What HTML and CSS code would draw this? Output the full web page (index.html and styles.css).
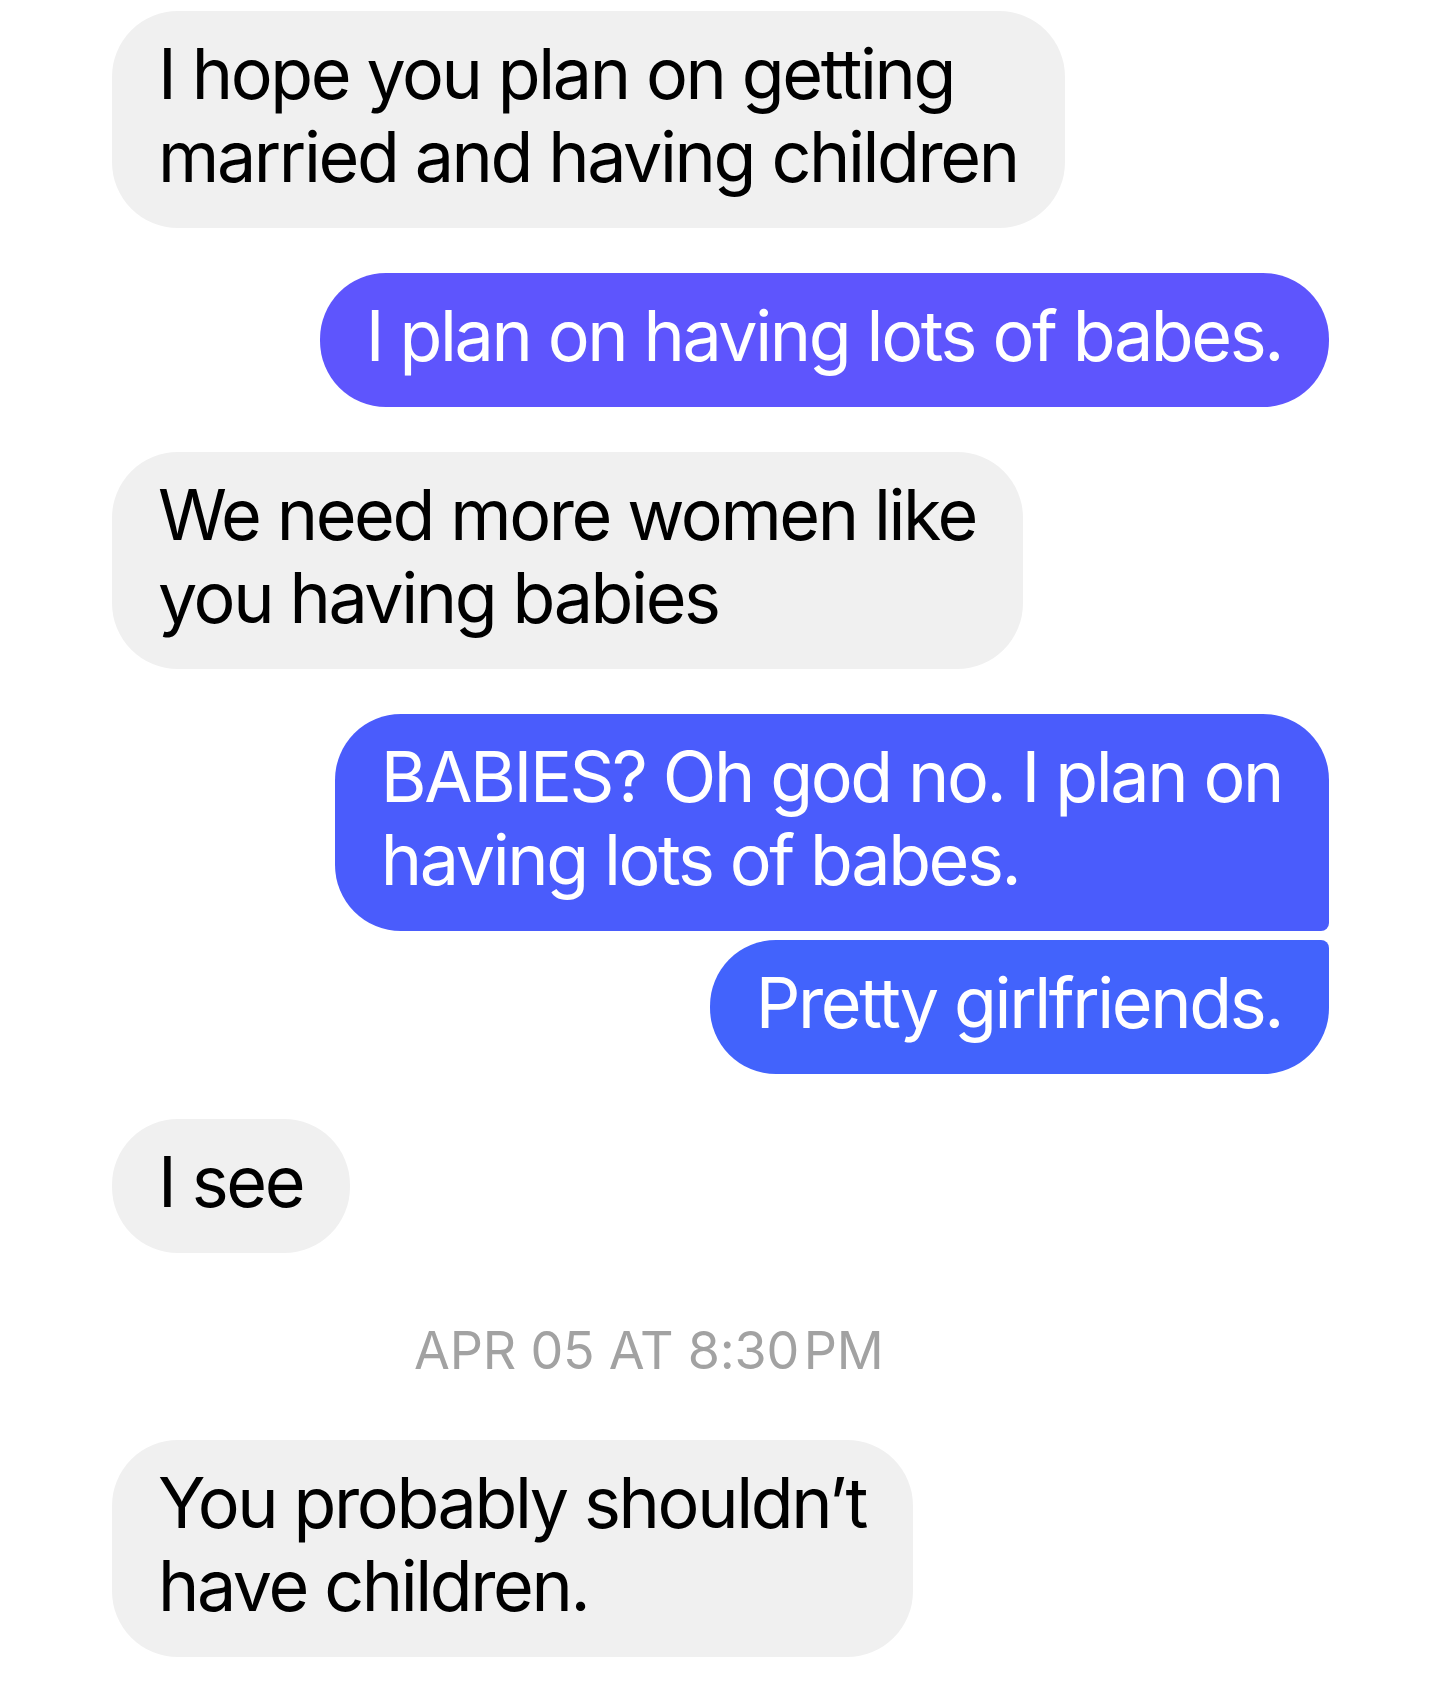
FILE: index.html
```html
<!DOCTYPE html>
<html lang="en">
<head>
<meta charset="utf-8">
<title>Messages</title>
<link rel="stylesheet" href="styles.css">
</head>
<body>
<main class="thread">
  <div class="msg in first">I hope you plan on getting<br>married and having children</div>
  <div class="msg out b2">I plan on having lots of babes.</div>
  <div class="msg in">We need more women like<br>you having babies</div>
  <div class="msg out b4 group-top">BABIES? Oh god no. I plan on<br>having lots of babes.</div>
  <div class="msg out b5 group-bottom">Pretty girlfriends.</div>
  <div class="msg in">I see</div>
  <div class="stamp">APR 05 AT 8:30&#8202;PM</div>
  <div class="msg in last">You probably shouldn’t<br>have children.</div>
</main>
</body>
</html>
```
FILE: styles.css
```css
html, body {
  margin: 0;
  padding: 0;
  background: #ffffff;
}
body {
  font-family: "Inter", "Liberation Sans", sans-serif;
  -webkit-font-smoothing: antialiased;
}
.thread {
  display: flex;
  flex-direction: column;
  padding: 11px 127px 34px 112px;
}
.msg {
  font-size: 70px;
  line-height: 83px;
  padding: 21px 47px 30px 46px;
  border-radius: 66px;
  margin-top: 45px;
  letter-spacing: -2.4px;
  white-space: nowrap;
}
.msg.first { margin-top: 0; }
.in {
  align-self: flex-start;
  background: #f0f0f0;
  color: #000000;
}
.out {
  align-self: flex-end;
  color: #ffffff;
}
.b2 { background: #5e55fd; }
.b4 { background: #4a5cfc; }
.b5 { background: #4263fc; }
.group-top { border-bottom-right-radius: 8px; }
.group-bottom { border-top-right-radius: 8px; margin-top: 9px; }
.stamp {
  font-size: 52px;
  line-height: 62px;
  color: #a2a2a2;
  padding-left: 302px;
  margin-top: 67px;
  letter-spacing: -0.2px;
}
.msg.last { margin-top: 58px; }
```
